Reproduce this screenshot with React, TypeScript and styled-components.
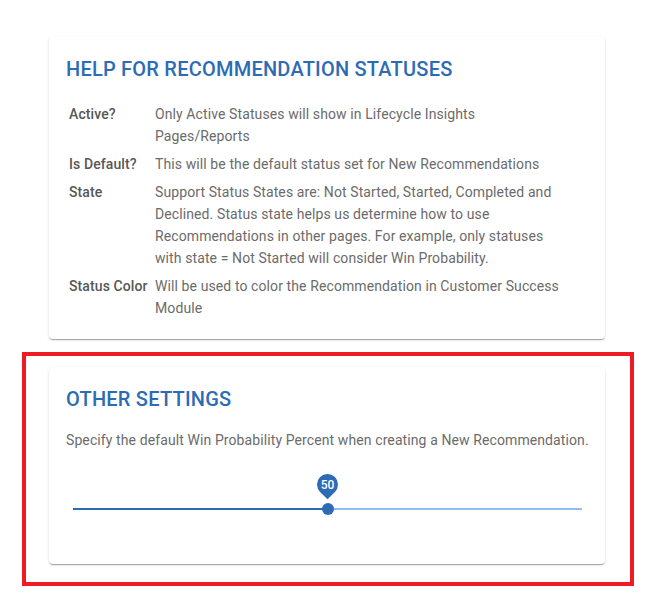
import React from "react";
import styled, { createGlobalStyle } from "styled-components";

const GlobalStyle = createGlobalStyle`
  html, body {
    margin: 0;
    padding: 0;
    background: #ffffff;
  }
  body {
    font-family: Roboto, "Noto Sans", "Liberation Sans", sans-serif;
    -webkit-font-smoothing: antialiased;
  }
`;

const Page = styled.div`
  width: 669px;
  min-height: 600px;
  box-sizing: border-box;
  padding: 37px 0 0 22px;
  display: flex;
  flex-direction: column;
  gap: 13px;
`;

const Card = styled.section<{ $inset?: number }>`
  width: 556px;
  box-sizing: border-box;
  margin-left: ${(p) => p.$inset ?? 0}px;
  background: #ffffff;
  border-radius: 4px;
  box-shadow: 0 2px 1px -1px rgba(0, 0, 0, 0.2), 0 1px 1px 0 rgba(0, 0, 0, 0.14),
    0 1px 3px 0 rgba(0, 0, 0, 0.12);
  padding: 16px 14px 17px 17px;
  display: flex;
  flex-direction: column;
`;

const Title = styled.h2`
  margin: 0;
  font-size: 20px;
  line-height: 32px;
  font-weight: 500;
  color: #2d6bb4;
  letter-spacing: 0.22px;
`;

const HelpTable = styled.table`
  margin-top: 15px;
  border-collapse: collapse;
  font-size: 14px;
  line-height: 22px;
  letter-spacing: 0.1px;
`;

const LabelCell = styled.th`
  text-align: left;
  vertical-align: top;
  font-weight: 500;
  color: #575757;
  padding: 3px 2px 3px 3px;
  white-space: nowrap;
  width: 84px;
`;

const DescCell = styled.td`
  vertical-align: top;
  color: #6b6b6b;
  padding: 3px 22px 3px 0;
`;

const Highlight = styled.div`
  width: 612px;
  box-sizing: border-box;
  border: 4px solid #ed1c24;
  padding: 11px 25px 18px 23px;
`;

const Description = styled.p`
  margin: 14px 0 0 0;
  font-size: 14px;
  line-height: 22px;
  letter-spacing: 0.1px;
  color: #6b6b6b;
  white-space: nowrap;
`;

const SliderRoot = styled.div`
  position: relative;
  height: 96px;
  margin: 0 9px 0 7px;
`;

const Rail = styled.div`
  position: absolute;
  left: 0;
  right: 0;
  top: 57px;
  height: 2px;
  background: #8fbcf4;
`;

const Track = styled.div`
  position: absolute;
  left: 0;
  top: 57px;
  height: 2px;
  background: #2d6bb4;
`;

const Thumb = styled.div`
  position: absolute;
  top: 52px;
  width: 12px;
  height: 12px;
  margin-left: -6px;
  border-radius: 50%;
  background: #2d6bb4;
`;

const ValueLabel = styled.div`
  position: absolute;
  top: 23px;
  width: 21px;
  height: 21px;
  margin-left: -10.5px;
  display: flex;
  align-items: center;
  justify-content: center;
`;

const Pin = styled.div`
  position: absolute;
  inset: 0;
  background: #2d6bb4;
  border-radius: 50% 50% 50% 0;
  transform: rotate(-45deg);
`;

const PinText = styled.span`
  position: relative;
  color: #ffffff;
  font-size: 12px;
  font-weight: 500;
  line-height: 1;
`;

const rows: { label: string; desc: string }[] = [
  {
    label: "Active?",
    desc: "Only Active Statuses will show in Lifecycle Insights Pages/Reports",
  },
  {
    label: "Is Default?",
    desc: "This will be the default status set for New Recommendations",
  },
  {
    label: "State",
    desc: "Support Status States are: Not Started, Started, Completed and Declined. Status state helps us determine how to use Recommendations in other pages. For example, only statuses with state = Not Started will consider Win Probability.",
  },
  {
    label: "Status Color",
    desc: "Will be used to color the Recommendation in Customer Success Module",
  },
];

function Slider({ value }: { value: number }) {
  const pct = `${value}%`;
  return (
    <SliderRoot>
      <Rail />
      <Track style={{ width: pct }} />
      <ValueLabel style={{ left: pct }}>
        <Pin />
        <PinText>{value}</PinText>
      </ValueLabel>
      <Thumb style={{ left: pct }} />
    </SliderRoot>
  );
}

export default function App() {
  return (
    <>
      <GlobalStyle />
      <Page>
        <Card $inset={27}>
          <Title>HELP FOR RECOMMENDATION STATUSES</Title>
          <HelpTable>
            <tbody>
              {rows.map((r) => (
                <tr key={r.label}>
                  <LabelCell>{r.label}</LabelCell>
                  <DescCell>{r.desc}</DescCell>
                </tr>
              ))}
            </tbody>
          </HelpTable>
        </Card>
        <Highlight>
          <Card>
            <Title>OTHER SETTINGS</Title>
            <Description>
              Specify the default Win Probability Percent when creating a New Recommendation.
            </Description>
            <Slider value={50} />
          </Card>
        </Highlight>
      </Page>
    </>
  );
}
